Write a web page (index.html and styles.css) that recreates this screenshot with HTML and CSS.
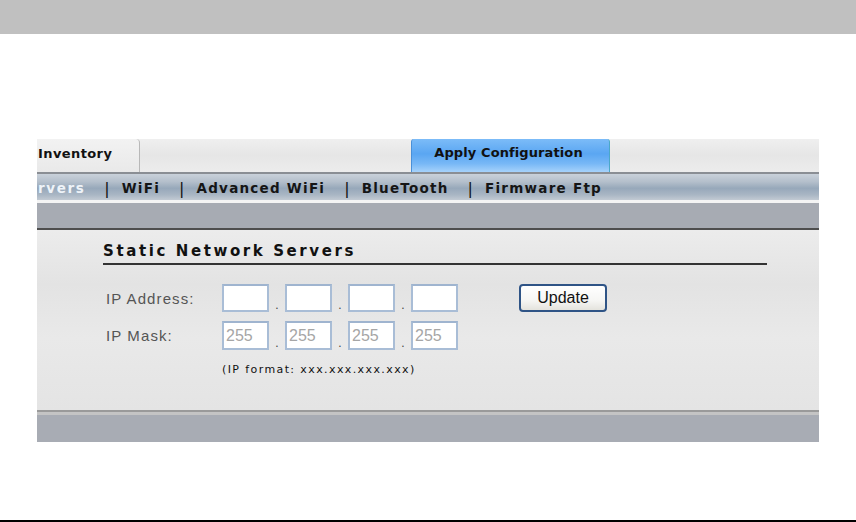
FILE: index.html
```html
<!DOCTYPE html>
<html>
<head>
<meta charset="utf-8">
<link rel="stylesheet" href="styles.css">
</head>
<body>
<div class="topbar"></div>
<div class="shot">
  <div class="tabs">
    <div class="tab tab-inv">Inventory</div>
    <div class="tab-space"></div>
    <div class="tab tab-apply">Apply Configuration</div>
  </div>
  <div class="nav">
    <span class="nav-item sel">rvers</span><span class="sep">|</span>
    <span class="nav-item">WiFi</span><span class="sep">|</span>
    <span class="nav-item">Advanced WiFi</span><span class="sep">|</span>
    <span class="nav-item">BlueTooth</span><span class="sep">|</span>
    <span class="nav-item">Firmware Ftp</span>
  </div>
  <div class="subbar"></div>
  <div class="content">
    <h2 class="heading">Static Network Servers</h2>
    <div class="form">
      <div class="label">IP Address:</div>
      <div class="ip">
        <input class="octet" type="text"><span class="dot">.</span>
        <input class="octet" type="text"><span class="dot">.</span>
        <input class="octet" type="text"><span class="dot">.</span>
        <input class="octet" type="text">
      </div>
      <button class="update">Update</button>
      <div class="label">IP Mask:</div>
      <div class="ip">
        <input class="octet" type="text" placeholder="255"><span class="dot">.</span>
        <input class="octet" type="text" placeholder="255"><span class="dot">.</span>
        <input class="octet" type="text" placeholder="255"><span class="dot">.</span>
        <input class="octet" type="text" placeholder="255">
      </div>
      <div></div>
      <div></div>
      <div class="hint">(IP format: xxx.xxx.xxx.xxx)</div>
    </div>
  </div>
  <div class="footbar"></div>
</div>
<div class="bottomline"></div>
</body>
</html>
```

FILE: styles.css
```css
html, body {
  margin: 0;
  padding: 0;
  background: #ffffff;
  width: 856px;
  height: 522px;
  overflow: hidden;
  position: relative;
}
.topbar {
  height: 34px;
  background: #c0c0c0;
}
.shot {
  margin: 105px 0 0 37px;
  width: 782px;
}
.tabs {
  height: 33px;
  display: flex;
  background: linear-gradient(180deg, #efefef 0%, #e6e6e6 50%, #ececec 100%);
}
.tab {
  font-family: "DejaVu Sans", Verdana, sans-serif;
  font-weight: bold;
  font-size: 13px;
  color: #111;
  box-sizing: border-box;
}
.tab-inv {
  width: 103px;
  padding: 7px 0 0 1px;
  border-right: 1px solid #b8b8b8;
  border-top-right-radius: 4px;
  background: linear-gradient(180deg, #f2f2f2, #e9e9e9);
  letter-spacing: 0.4px;
}
.tab-space {
  width: 271px;
}
.tab-apply {
  width: 199px;
  text-align: center;
  padding: 6px 4px 0 0;
  border-top-left-radius: 3px;
  border-top-right-radius: 3px;
  border-left: 1px solid #4a90d8;
  border-right: 1px solid #4aa8c8;
  background: linear-gradient(180deg, #7cbcf8 0%, #5aa6f2 45%, #78b8f6 75%, #a6d2fb 100%);
  letter-spacing: 0.1px;
}
.nav {
  height: 28px;
  box-sizing: border-box;
  border-top: 2px solid #8a8e94;
  background: linear-gradient(180deg, #c9d1da 0%, #b4bfcb 30%, #97a8ba 55%, #a9b6c4 80%, #c2cad3 100%);
  display: flex;
  align-items: center;
  font-family: "DejaVu Sans", Verdana, sans-serif;
  font-weight: bold;
  font-size: 13.5px;
  color: #151515;
  letter-spacing: 1.25px;
  white-space: nowrap;
  overflow: hidden;
  padding-top: 2px;
}
.nav-item.sel {
  color: #eef3f8;
  padding-left: 1px;
  letter-spacing: 1.6px;
}
.sep {
  font-weight: normal;
  color: #111;
  margin: 0 12px 0 19px;
  font-size: 16px;
  letter-spacing: 0;
}
.subbar {
  height: 30px;
  box-sizing: border-box;
  border-top: 3px solid #f4f4f4;
  border-bottom: 2px solid #4e4e4e;
  background: #a7abb3;
}
.content {
  height: 180px;
  box-sizing: border-box;
  padding: 12px 52px 0 66px;
  background: linear-gradient(180deg, #ececec 0%, #e3e3e3 30%, #e9e9e9 60%, #e4e4e4 100%);
}
.heading {
  margin: 0;
  font-family: "DejaVu Sans", Verdana, sans-serif;
  font-weight: bold;
  font-size: 15px;
  letter-spacing: 2.6px;
  color: #111;
  padding-bottom: 2px;
  border-bottom: 2px solid #333;
  line-height: 19px;
}
.form {
  display: grid;
  grid-template-columns: 116px 297px auto;
  grid-template-rows: 28px 29px auto;
  row-gap: 9px;
  margin: 19px 0 0 3px;
  align-items: center;
}
.label {
  font-family: "Liberation Sans", Arial, sans-serif;
  font-size: 15px;
  letter-spacing: 1.1px;
  color: #555;
}
.ip {
  display: flex;
  align-items: center;
  height: 100%;
}
.octet {
  width: 47px;
  height: 100%;
  box-sizing: border-box;
  border: 2px solid #a9bdd6;
  border-top-color: #9fb4cf;
  background: #fff;
  margin: 0;
  padding: 1px 2px;
  font-family: "Liberation Sans", Arial, sans-serif;
  font-size: 16px;
  color: #999;
}
.octet::placeholder {
  color: #a6a6a6;
  opacity: 1;
}
.dot {
  width: 16px;
  text-align: center;
  font-family: "Liberation Sans", Arial, sans-serif;
  font-size: 12px;
  color: #444;
  align-self: flex-end;
}
.update {
  justify-self: start;
  margin-left: 0;
  width: 88px;
  height: 28px;
  box-sizing: border-box;
  border: 2px solid #2f5486;
  border-radius: 4px;
  background: linear-gradient(180deg, #ffffff 0%, #f6f6f4 60%, #e4e3dd 100%);
  font-family: "Liberation Sans", Arial, sans-serif;
  font-size: 16px;
  color: #111;
  padding: 0;
}
.hint {
  margin-top: 4px;
  font-family: "DejaVu Sans", Verdana, sans-serif;
  font-size: 11px;
  letter-spacing: 1.4px;
  color: #111;
  white-space: nowrap;
}
.footbar {
  height: 32px;
  box-sizing: border-box;
  border-top: 2px solid #9a9a9a;
  background: linear-gradient(180deg, #c4c4c4 0px, #c4c4c4 3px, #a8acb4 3px, #a8acb4 100%);
}
.bottomline {
  position: absolute;
  left: 0;
  right: 0;
  top: 520px;
  height: 2px;
  background: #000;
}
```
